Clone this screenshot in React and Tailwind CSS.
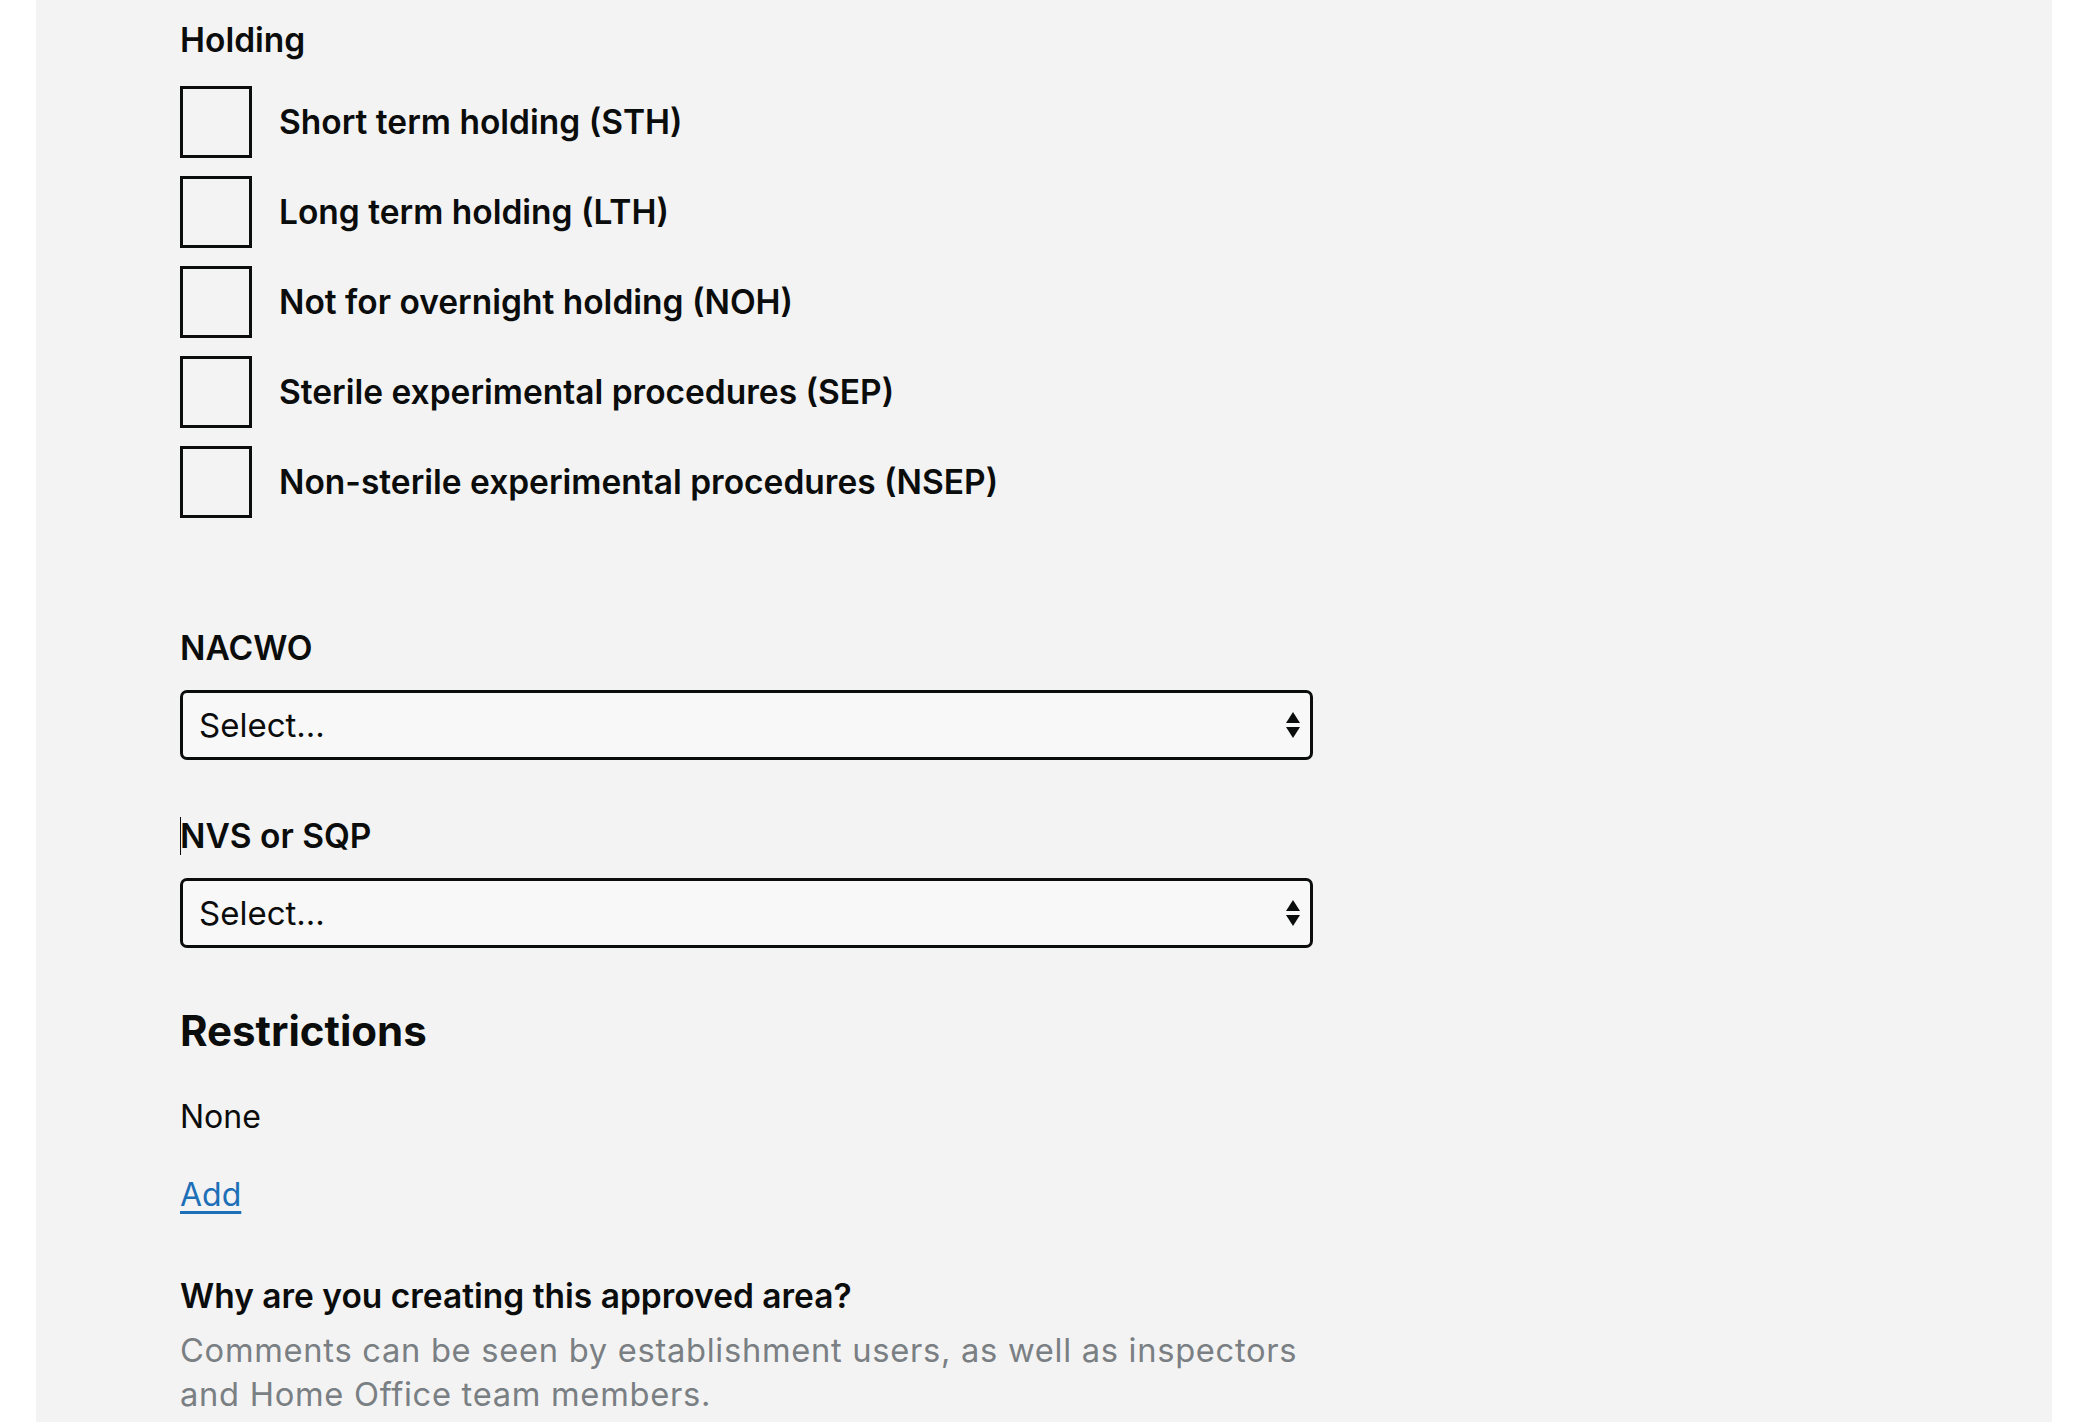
const holdingOptions = [
  'Short term holding (STH)',
  'Long term holding (LTH)',
  'Not for overnight holding (NOH)',
  'Sterile experimental procedures (SEP)',
  'Non-sterile experimental procedures (NSEP)',
];

function SelectBox() {
  return (
    <div className="mt-[22px] flex h-[70px] w-[1133px] items-center justify-between rounded-[7px] border-[3px] border-[#0b0c0c] bg-[#f8f8f8] pl-[16px] pr-[9px]">
      <span className="text-[33px] leading-[40px] text-[#0b0c0c]">Select...</span>
      <svg width="16" height="34" viewBox="0 0 16 34" className="shrink-0">
        <path d="M8 4 L15 15 L1 15 Z" fill="#0b0c0c" />
        <path d="M1 19 L15 19 L8 30 Z" fill="#0b0c0c" />
      </svg>
    </div>
  );
}

export default function App() {
  return (
    <div className="min-h-screen bg-white" style={{ fontFamily: 'Inter, "Noto Sans", sans-serif' }}>
      <div className="ml-[36px] min-h-[1422px] w-[2016px] bg-[#f3f3f3] pl-[144px] pt-[20px] text-[#0b0c0c]">
        <p className="text-[33.5px] font-semibold leading-[40px]">Holding</p>

        <div className="mt-[26px] flex flex-col gap-[18px]">
          {holdingOptions.map((opt) => (
            <label key={opt} className="flex items-center gap-[27px]">
              <span className="h-[72px] w-[72px] shrink-0 border-[3px] border-[#0b0c0c] bg-[#f3f3f3]" />
              <span className="text-[33.5px] font-semibold leading-[40px]">{opt}</span>
            </label>
          ))}
        </div>

        <p className="mt-[110px] text-[33.5px] font-semibold leading-[40px]">NACWO</p>
        <SelectBox />

        <p className="mt-[56px] flex items-center text-[33.5px] font-semibold leading-[40px]">
          <span className="-mr-px inline-block h-[38px] w-px bg-[#0b0c0c]" />
          NVS or SQP
        </p>
        <SelectBox />

        <h2 className="mt-[57px] text-[42px] font-bold leading-[52px]">Restrictions</h2>

        <p className="mt-[40px] text-[32px] leading-[40px]">None</p>

        <a href="#" className="mt-[38px] block w-fit text-[32px] leading-[40px] text-[#1d70b8] underline underline-offset-[5px]">
          Add
        </a>

        <p className="mt-[61px] text-[33.5px] font-semibold leading-[40px]">Why are you creating this approved area?</p>
        <p className="mt-[12px] w-[1140px] text-[32.7px] leading-[44px] tracking-[0.7px] text-[#7a7f83]">
          Comments can be seen by establishment users, as well as inspectors and Home Office team members.
        </p>
      </div>
    </div>
  );
}
